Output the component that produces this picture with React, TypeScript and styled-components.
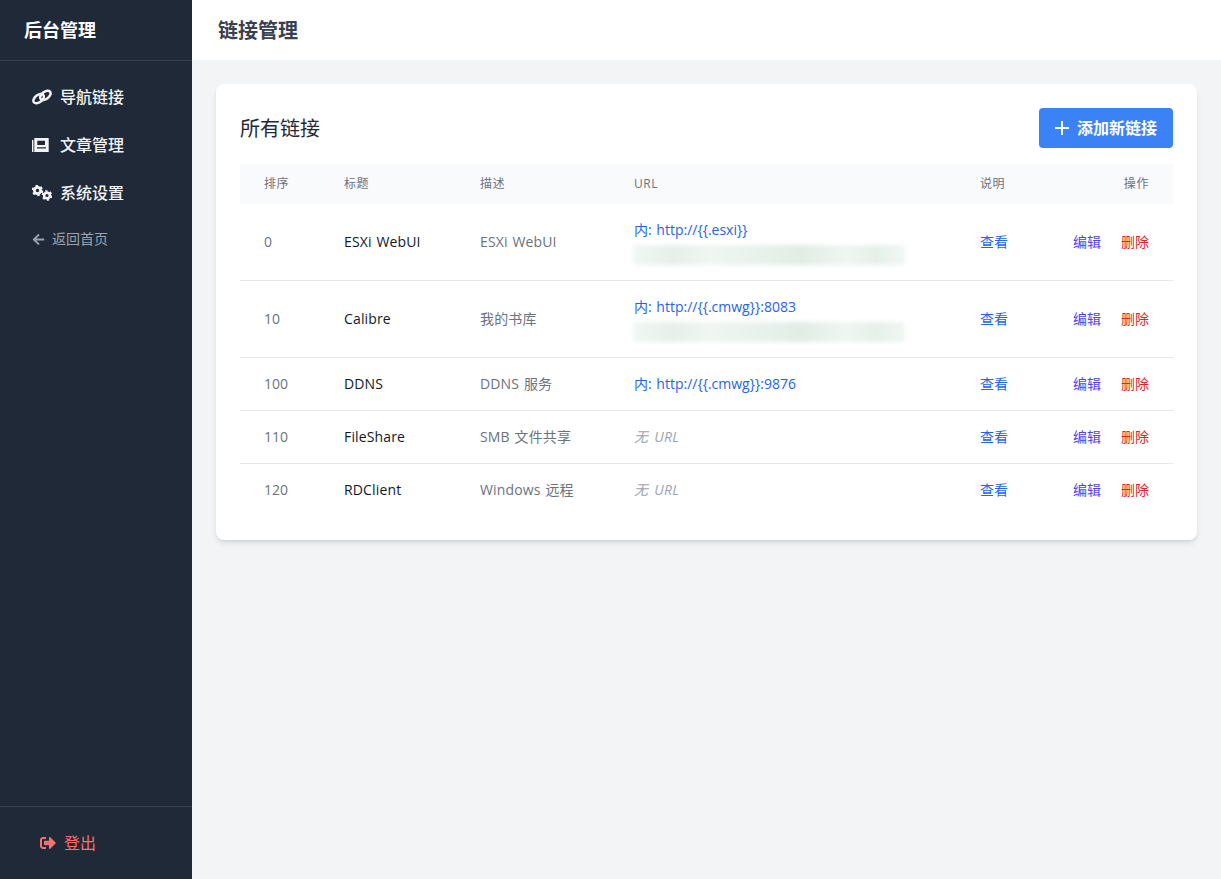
import styled, { createGlobalStyle } from "styled-components";
import { FaArrowLeft, FaSignOutAlt } from "react-icons/fa";
import type { ReactNode } from "react";

const GlobalStyle = createGlobalStyle`
  html, body {
    margin: 0;
    height: 100%;
  }
  body {
    font-family: "Open Sans", "Noto Sans CJK SC", sans-serif;
    background: #f3f4f6;
    color: #111827;
  }
  #root {
    height: 100%;
  }
`;

const Page = styled.div`
  display: flex;
  height: 879px;
  overflow: hidden;
`;

const Sidebar = styled.aside`
  width: 192px;
  flex: none;
  display: flex;
  flex-direction: column;
  background: #1f2937;
  color: #fff;
`;

const Brand = styled.div`
  height: 61px;
  padding: 0 0 2px 24px;
  box-sizing: border-box;
  display: flex;
  align-items: center;
  font-size: 18px;
  font-weight: 700;
  border-bottom: 1px solid #374151;
`;

const Nav = styled.nav`
  flex: 1;
  display: flex;
  flex-direction: column;
  padding: 12px 16px;
`;

const NavItem = styled.a`
  height: 48px;
  padding-left: 16px;
  display: flex;
  align-items: center;
  gap: 8px;
  font-size: 16px;
  font-weight: 500;
  color: #f3f4f6;
`;

// 字体比原图低 1px，文字单独往上提一点，图标不动
const Label = styled.span`
  margin-bottom: 2px;
`;

const NavIcon = styled.span`
  width: 20px;
  display: flex;
  justify-content: flex-start;
`;

const BackLink = styled.a`
  height: 44px;
  padding-left: 16px;
  display: flex;
  align-items: center;
  gap: 7px;
  font-size: 14px;
  color: #9ca3af;
`;

const SidebarFooter = styled.div`
  height: 73px;
  padding: 16px 16px 16px 40px;
  box-sizing: border-box;
  display: flex;
  align-items: center;
  gap: 8px;
  border-top: 1px solid #374151;
  font-size: 16px;
  color: #f87171;
`;

const Main = styled.main`
  flex: 1;
  display: flex;
  flex-direction: column;
  min-width: 0;
`;

const Header = styled.header`
  height: 60px;
  flex: none;
  padding: 0 0 2px 26px;
  box-sizing: border-box;
  display: flex;
  align-items: center;
  background: #fff;
  font-size: 20px;
  font-weight: 700;
  color: #374151;
`;

const Content = styled.div`
  padding: 24px;
`;

const Card = styled.section`
  padding: 24px;
  background: #fff;
  border-radius: 8px;
  box-shadow: 0 4px 6px -1px rgba(0, 0, 0, 0.1), 0 2px 4px -2px rgba(0, 0, 0, 0.1);
`;

const CardHead = styled.div`
  height: 40px;
  margin-bottom: 16px;
  display: flex;
  align-items: center;
  justify-content: space-between;
`;

const CardTitle = styled.h2`
  margin: 0 0 2px;
  font-size: 20px;
  font-weight: 400;
  color: #1f2937;
`;

const AddButton = styled.button`
  width: 134px;
  height: 40px;
  padding: 0;
  display: flex;
  align-items: center;
  justify-content: center;
  gap: 8px;
  border: 0;
  border-radius: 4px;
  background: #3b82f6;
  color: #fff;
  font-family: inherit;
  font-size: 16px;
  font-weight: 700;
`;

const Table = styled.table`
  width: 933px;
  table-layout: fixed;
  border-collapse: collapse;
`;

const HeadCell = styled.th<{ $width: number; $right?: boolean }>`
  width: ${({ $width }) => $width}px;
  height: 40px;
  padding: 0 24px 2px;
  box-sizing: border-box;
  background: #f9fafb;
  font-size: 12px;
  font-weight: 400;
  letter-spacing: 0.05em;
  color: #6b7280;
  text-align: ${({ $right }) => ($right ? "right" : "left")};
`;

const Row = styled.tr`
  border-bottom: 1px solid #e5e7eb;

  &:last-child {
    border-bottom: 0;
  }
`;

const Cell = styled.td<{ $tone?: string; $right?: boolean; $wide?: boolean }>`
  padding: 16px 24px;
  font-size: 14px;
  line-height: 20px;
  word-spacing: ${({ $wide }) => ($wide ? "1px" : "0")};
  letter-spacing: ${({ $wide }) => ($wide ? "0.15px" : "0")};
  color: ${({ $tone }) => $tone || "#6b7280"};
  text-align: ${({ $right }) => ($right ? "right" : "left")};
  white-space: nowrap;
`;

const UrlLink = styled.a`
  display: block;
  word-spacing: 1px;
  color: #2563eb;
`;

const NoUrl = styled.span`
  font-style: italic;
  word-spacing: 2px;
  letter-spacing: 0.3px;
  color: #9ca3af;
`;

// 原图这一行被打了码，用一条模糊的色带代替
const Blurred = styled.div`
  width: 272px;
  height: 20px;
  margin: 5px 0 -1px -1px;
  background: linear-gradient(
    90deg,
    #f1f7f3 0%,
    #e5f0e9 15%,
    #f0f6f2 28%,
    #e6f1ea 50%,
    #e0ede5 62%,
    #eff6f1 78%,
    #e5f0e9 90%,
    #f2f7f4 100%
  );
  filter: blur(2px);
`;

const ActionLink = styled.a<{ $color: string }>`
  color: ${({ $color }) => $color};

  & + & {
    margin-left: 20px;
  }
`;

const LinkIcon = () => (
  <svg width="20" height="16" viewBox="0 0 20 16" fill="none" stroke="currentColor" strokeWidth="2.4">
    <ellipse cx="6.6" cy="9.6" rx="6" ry="3.6" transform="rotate(-38 6.6 9.6)" />
    <ellipse cx="13.4" cy="6.4" rx="6" ry="3.6" transform="rotate(-38 13.4 6.4)" />
  </svg>
);

const PaperIcon = () => (
  <svg width="17" height="14" viewBox="0 0 17 14" fill="currentColor">
    <rect x="0" y="2" width="1.4" height="12" />
    <path
      fillRule="evenodd"
      d="M2.3 0H16.7V14H2.3ZM5.3 2.7V7H13V2.7ZM5 9.3V10.5H14V9.3Z"
    />
  </svg>
);

const Gear = ({ x, y, r }: { x: number; y: number; r: number }) => (
  <g fill="none" stroke="currentColor">
    <circle cx={x} cy={y} r={r * 0.62} strokeWidth={r * 0.55} />
    <circle
      cx={x}
      cy={y}
      r={r * 0.95}
      strokeWidth={r * 0.4}
      strokeDasharray={`${(r * 5.97) / 12} ${(r * 5.97) / 12}`}
    />
  </g>
);

const GearsIcon = () => (
  <svg width="20" height="16" viewBox="0 0 20 16">
    <Gear x={5.5} y={5.5} r={5} />
    <Gear x={15} y={10.5} r={4.6} />
  </svg>
);

const PlusIcon = () => (
  <svg width="14" height="14" viewBox="0 0 14 14" stroke="currentColor" strokeWidth="2">
    <path d="M7 0v14M0 7h14" />
  </svg>
);

interface LinkRow {
  sort: number;
  title: string;
  desc: string;
  url?: string;
  masked?: boolean;
}

const rows: LinkRow[] = [
  { sort: 0, title: "ESXi WebUI", desc: "ESXi WebUI", url: "http://{{.esxi}}", masked: true },
  { sort: 10, title: "Calibre", desc: "我的书库", url: "http://{{.cmwg}}:8083", masked: true },
  { sort: 100, title: "DDNS", desc: "DDNS 服务", url: "http://{{.cmwg}}:9876" },
  { sort: 110, title: "FileShare", desc: "SMB 文件共享" },
  { sort: 120, title: "RDClient", desc: "Windows 远程" },
];

const navItems: { label: string; icon: ReactNode }[] = [
  { label: "导航链接", icon: <LinkIcon /> },
  { label: "文章管理", icon: <PaperIcon /> },
  { label: "系统设置", icon: <GearsIcon /> },
];

export default function App() {
  return (
    <Page>
      <GlobalStyle />
      <Sidebar>
        <Brand>后台管理</Brand>
        <Nav>
          {navItems.map((item) => (
            <NavItem key={item.label}>
              <NavIcon>{item.icon}</NavIcon>
              <Label>{item.label}</Label>
            </NavItem>
          ))}
          <BackLink>
            <FaArrowLeft size={13} />
            <Label>返回首页</Label>
          </BackLink>
        </Nav>
        <SidebarFooter>
          <FaSignOutAlt size={16} />
          <Label>登出</Label>
        </SidebarFooter>
      </Sidebar>
      <Main>
        <Header>链接管理</Header>
        <Content>
          <Card>
            <CardHead>
              <CardTitle>所有链接</CardTitle>
              <AddButton>
                <PlusIcon />
                <Label>添加新链接</Label>
              </AddButton>
            </CardHead>
            <Table>
              <thead>
                <tr>
                  <HeadCell $width={80}>排序</HeadCell>
                  <HeadCell $width={136}>标题</HeadCell>
                  <HeadCell $width={154}>描述</HeadCell>
                  <HeadCell $width={346}>URL</HeadCell>
                  <HeadCell $width={93}>说明</HeadCell>
                  <HeadCell $width={124} $right>
                    操作
                  </HeadCell>
                </tr>
              </thead>
              <tbody>
                {rows.map((row) => (
                  <Row key={row.sort}>
                    <Cell>{row.sort}</Cell>
                    <Cell $tone="#111827" $wide>
                      {row.title}
                    </Cell>
                    <Cell $wide>{row.desc}</Cell>
                    <Cell>
                      {row.url ? <UrlLink>内: {row.url}</UrlLink> : <NoUrl>无 URL</NoUrl>}
                      {row.masked && <Blurred />}
                    </Cell>
                    <Cell $tone="#2563eb">查看</Cell>
                    <Cell $right>
                      <ActionLink $color="#4f46e5">编辑</ActionLink>
                      <ActionLink $color="#dc2626">删除</ActionLink>
                    </Cell>
                  </Row>
                ))}
              </tbody>
            </Table>
          </Card>
        </Content>
      </Main>
    </Page>
  );
}
